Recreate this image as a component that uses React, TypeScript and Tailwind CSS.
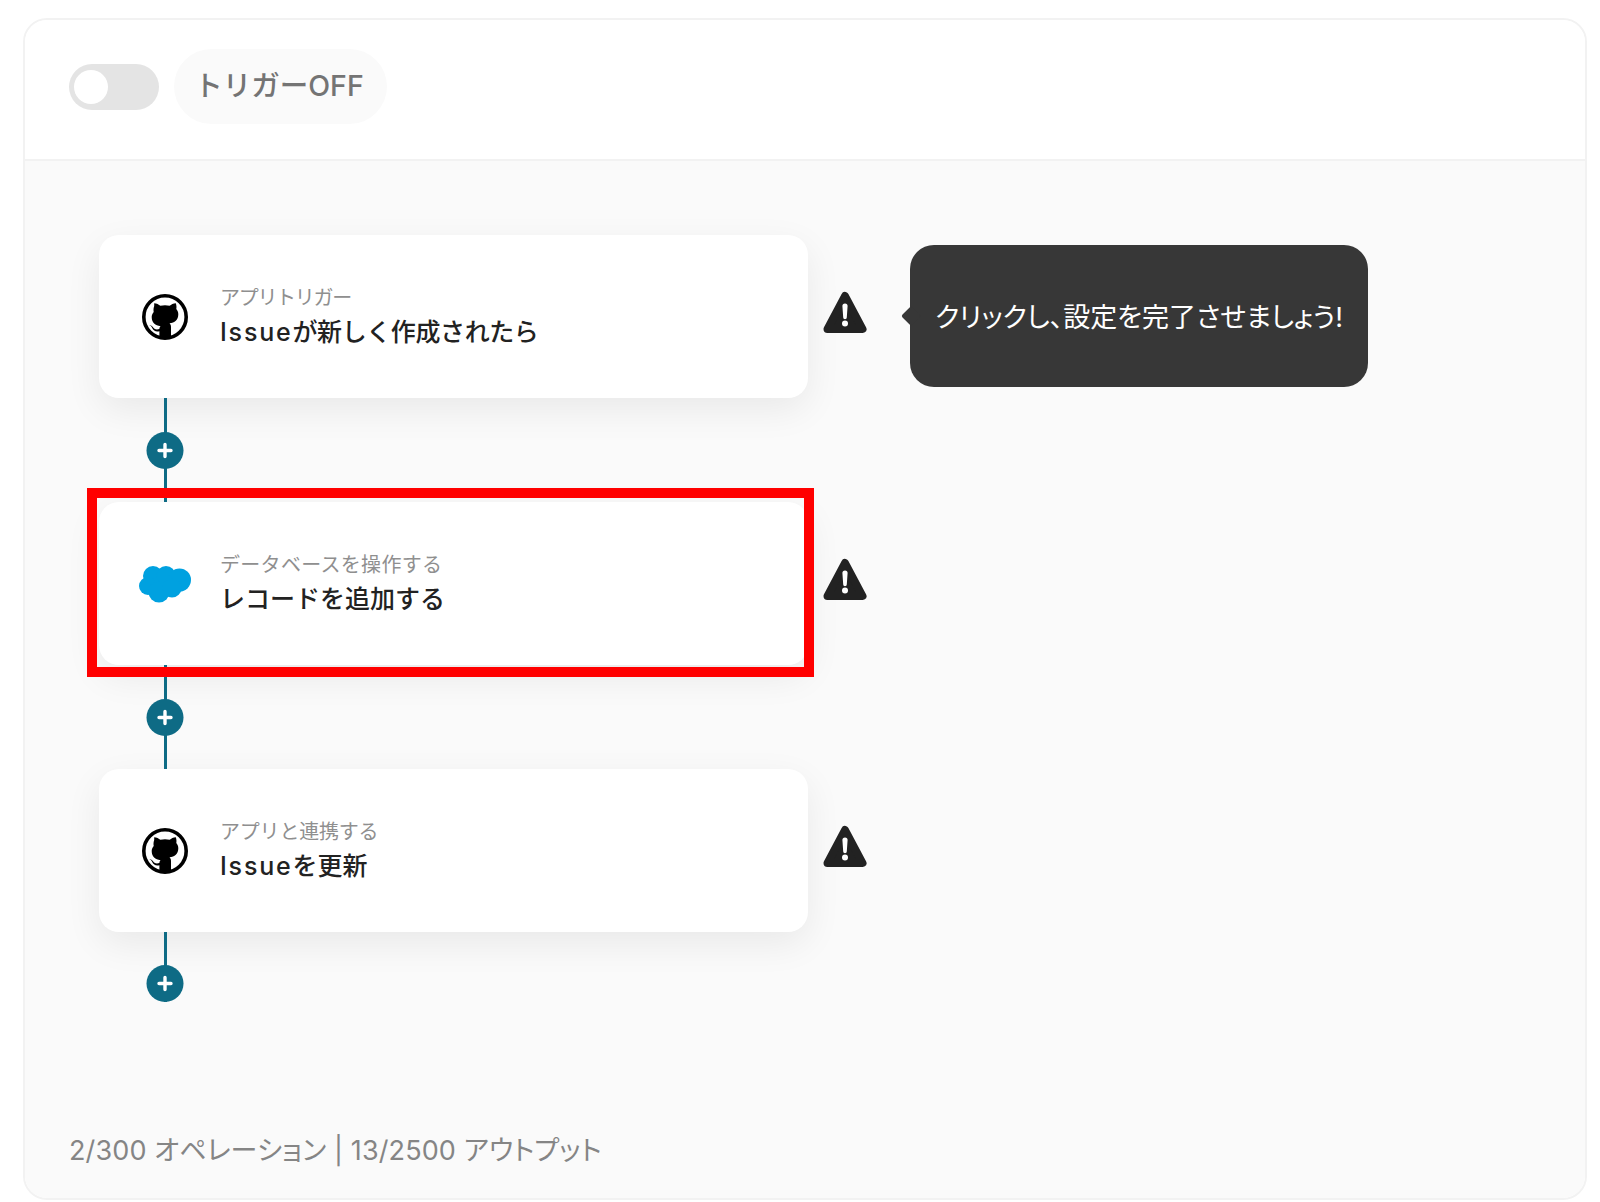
import React from "react";

const FONT = "font-['Inter','Noto_Sans_CJK_JP',sans-serif]";

function GithubIcon() {
  return (
    <svg width="48" height="48" viewBox="0 0 48 48" className="shrink-0">
      <circle cx="24" cy="24" r="21.2" fill="none" stroke="#000" strokeWidth="3.6" />
      <path
        d="M13.2 10.2c2.4.2 4.6 1.2 6.2 2.6 3-.8 6.2-.8 9.2 0 1.6-1.4 3.8-2.4 6.2-2.6.7 2 .9 4 .5 5.8 1.3 1.5 2 3.2 2 5.2 0 5.8-3.6 8.4-8.8 9.1 1 .9 1.5 2.2 1.5 3.7v9.5c-3.7 1.1-7.9 1.1-11.6 0v-5.2c-3.6.7-5.9-.3-7.2-3.2-.6-1.3-1.5-2.3-3-3 1.6.2 3 1 4 2.4 1.4 1.9 3.2 2.3 6.2 1.6 0-1.2.3-2 1.1-2.9-5.2-.7-8.8-3.3-8.8-9.1 0-2 .7-3.7 2-5.2-.4-1.8-.2-3.8.5-5.8z"
        fill="#000"
      />
    </svg>
  );
}

function SalesforceIcon() {
  return (
    <svg width="52" height="38" viewBox="0 0 52 38" className="shrink-0">
      <g fill="#00a1e0">
        <circle cx="14" cy="11" r="10" />
        <circle cx="27" cy="10.5" r="9.5" />
        <circle cx="40.5" cy="15" r="11.5" />
        <circle cx="9" cy="21" r="9" />
        <circle cx="20" cy="27" r="10.5" />
        <circle cx="33" cy="23" r="9.5" />
      </g>
    </svg>
  );
}

function WarnIcon() {
  return (
    <svg width="44" height="44" viewBox="0 0 44 44" className="shrink-0">
      <path d="M22 5 L39.5 38 H4.5 Z" fill="#222" stroke="#222" strokeWidth="8" strokeLinejoin="round" />
      <path d="M19.4 15a2.6 2.6 0 0 1 5.2 0l-.8 11.5a1.8 1.8 0 0 1-3.6 0z" fill="#fff" />
      <circle cx="22" cy="32.5" r="3" fill="#fff" />
    </svg>
  );
}

function Connector({ height, plusTop }: { height: string; plusTop: string }) {
  return (
    <div className={`relative ml-[64.5px] w-[3px] bg-[#0e6b85] ${height}`}>
      <div
        className={`absolute left-1/2 flex h-[37px] w-[37px] -translate-x-1/2 items-center justify-center rounded-full bg-[#0e6b85] ${plusTop}`}
      >
        <svg width="17" height="17" viewBox="0 0 17 17">
          <path d="M8.5 2.5v12M2.5 8.5h12" stroke="#fff" strokeWidth="3.4" strokeLinecap="round" />
        </svg>
      </div>
    </div>
  );
}

function Card({
  icon,
  sub,
  subClass,
  title,
  iconClass,
}: {
  icon: React.ReactNode;
  sub: string;
  subClass: string;
  title: React.ReactNode;
  iconClass: string;
}) {
  return (
    <div className="flex h-[163px] w-[709px] shrink-0 items-center rounded-[20px] bg-white shadow-[0_12px_36px_rgba(0,0,0,0.07)]">
      <div className={`flex w-[121px] shrink-0 ${iconClass}`}>{icon}</div>
      <div className="flex flex-col">
        <span className={`text-[20px] leading-[30px] text-[#8f8f8f] ${subClass}`}>{sub}</span>
        <span className="mt-[1px] text-[25px] font-medium leading-[36px] text-[#222]">{title}</span>
      </div>
    </div>
  );
}

export default function App() {
  return (
    <div className={`h-[1202px] w-[1600px] overflow-hidden bg-white pl-[23px] pt-[18px] ${FONT}`}>
      <div className="relative flex h-[1182px] w-[1564px] flex-col overflow-hidden rounded-[24px] border-2 border-[#f2f2f2]">
        <header className="flex h-[141px] shrink-0 items-center gap-[15px] border-b-2 border-[#f2f2f2] bg-white pb-[6px] pl-[44px]">
          <div className="flex h-[46px] w-[90px] items-center rounded-full bg-[#e4e4e4] pl-[5px]">
            <div className="h-[34px] w-[34px] rounded-full bg-white" />
          </div>
          <div className="flex h-[75px] w-[213px] items-center justify-center rounded-full bg-[#fafafa] pr-[3px] text-[28.5px] font-medium text-[#747474]">
            トリガーOFF
          </div>
        </header>
        <main className="flex flex-1 flex-col bg-[#fafafa] pl-[74px] pt-[74px]">
          <div className="flex items-center">
            <Card
              icon={<GithubIcon />}
              iconClass="pl-[42px]"
              sub="アプリトリガー"
              subClass="tracking-[-1.3px]"
              title={
                <>
                  <span className="tracking-[1.8px]">Issue</span>
                  <span className="tracking-[-0.4px]">が新しく作成されたら</span>
                </>
              }
            />
            <div className="mb-[8px] ml-[15px]">
              <WarnIcon />
            </div>
            <div className="relative mb-[2px] ml-[43px] flex h-[142px] w-[458px] items-center justify-center rounded-[24px] bg-[#373737] pt-[5px] text-[27px] text-white [font-feature-settings:'palt']">
              <div className="absolute left-[-6px] top-1/2 h-[14px] w-[14px] -translate-y-1/2 rotate-45 rounded-[2px] bg-[#373737]" />
              クリックし、設定を完了させましょう!
            </div>
          </div>
          <Connector height="h-[104px]" plusTop="top-[34px]" />
          <div className="flex items-center">
            <Card
              icon={<SalesforceIcon />}
              iconClass="pl-[40px]"
              sub="データベースを操作する"
              subClass="tracking-[0.3px]"
              title="レコードを追加する"
            />
            <div className="mb-[8px] ml-[15px]">
              <WarnIcon />
            </div>
          </div>
          <Connector height="h-[104px]" plusTop="top-[34px]" />
          <div className="flex items-center">
            <Card
              icon={<GithubIcon />}
              iconClass="pl-[42px]"
              sub="アプリと連携する"
              subClass="tracking-[-0.2px]"
              title={
                <>
                  <span className="tracking-[1.8px]">Issue</span>を更新
                </>
              }
            />
            <div className="mb-[8px] ml-[15px]">
              <WarnIcon />
            </div>
          </div>
          <Connector height="h-[70px]" plusTop="top-[33px]" />
          <div className="ml-[-30px] mt-[131px] text-[27px] leading-[36px] tracking-[0.12px] text-[#858585] [font-feature-settings:'palt']">
            2/300 オペレーション | 13/2500 アウトプット
          </div>
        </main>
        <div className="pointer-events-none absolute left-[62px] top-[468px] h-[189px] w-[727px] border-[10px] border-[#ff0000]" />
      </div>
    </div>
  );
}
